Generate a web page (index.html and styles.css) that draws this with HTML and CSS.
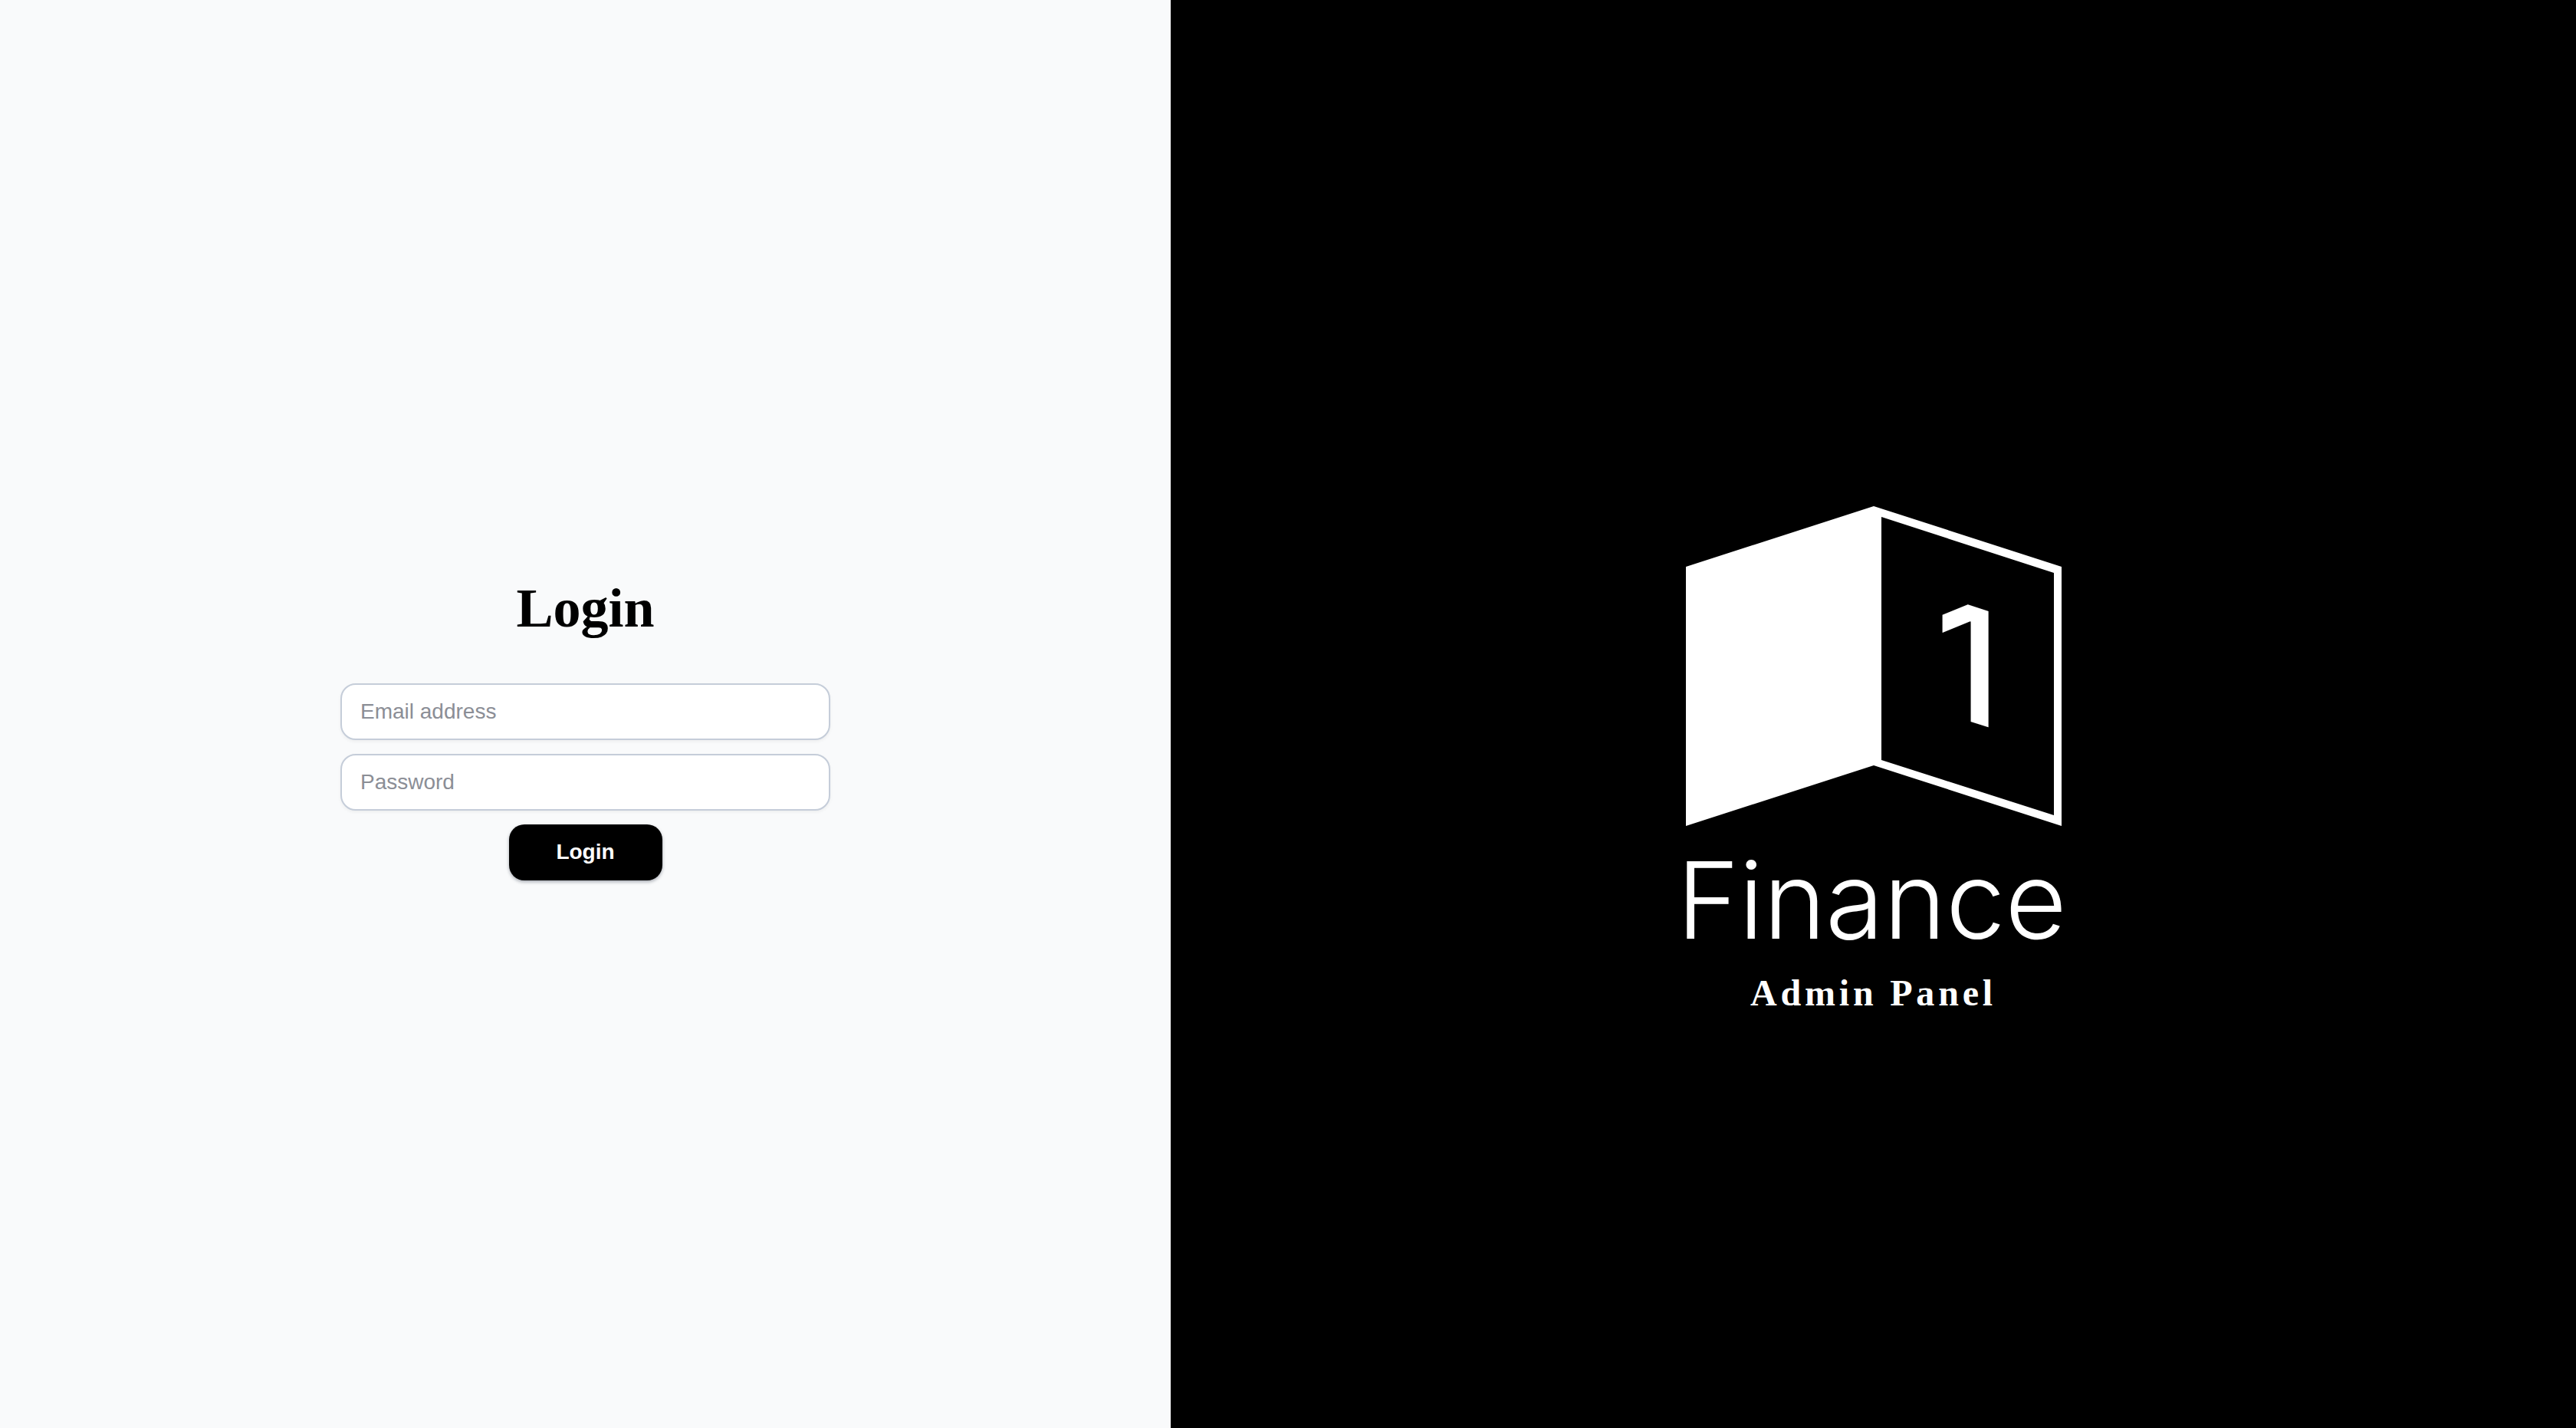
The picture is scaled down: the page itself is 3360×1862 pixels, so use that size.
FILE: index.html
```html
<!DOCTYPE html>
<html lang="en">
<head>
<meta charset="utf-8">
<title>Login</title>
<link rel="stylesheet" href="styles.css">
</head>
<body>
<main class="split">
  <section class="auth">
    <h1 class="auth-title">Login</h1>
    <form class="auth-form">
      <input class="field" type="email" placeholder="Email address">
      <input class="field" type="password" placeholder="Password">
      <button class="submit" type="button">Login</button>
    </form>
  </section>
  <section class="brand">
    <svg class="mark" viewBox="0 0 490 418" aria-hidden="true">
      <path class="mark-fill" fill-rule="evenodd" d="M245 0 L490 79 L490 417 L245 338 L0 417 L0 79 Z M255 14 L255 331 L480 403 L480 87 Z"/>
      <text class="mark-digit" transform="matrix(1 0.32 0 1 325 266)">1</text>
    </svg>
    <div class="brand-name">Finance</div>
    <div class="brand-sub">Admin Panel</div>
  </section>
</main>
</body>
</html>
```

FILE: styles.css
```css
* { box-sizing: border-box; }
html, body { margin: 0; height: 100%; }
body { background: #000; }
.split { display: flex; height: 1862px; overflow: hidden; }
.auth {
  width: 1527px;
  background: #f9fafb;
  display: flex;
  flex-direction: column;
  align-items: center;
  justify-content: center;
  padding-top: 38px;
}
.auth-title {
  margin: 0 0 58px;
  font: bold 72px/80px "Liberation Serif", serif;
  color: #000;
}
.auth-form { width: 639px; display: flex; flex-direction: column; align-items: center; gap: 18px; }
.field {
  width: 100%;
  height: 74px;
  padding: 0 24px;
  border: 2px solid #c5cdd9;
  border-radius: 20px;
  background: #fff;
  font: 28px "Liberation Sans", Arial, sans-serif;
  color: #111827;
  box-shadow: 0 2px 4px rgba(0,0,0,.05);
  outline: none;
}
.field::placeholder { color: #8b8e96; opacity: 1; }
.submit {
  width: 200px;
  height: 73px;
  border: 0;
  border-radius: 20px;
  background: #000;
  color: #fff;
  font: bold 28px "Liberation Sans", Arial, sans-serif;
  box-shadow: 0 2px 4px rgba(15,23,42,.35);
}
.brand {
  flex: 1;
  background: #000;
  color: #fff;
  display: flex;
  flex-direction: column;
  align-items: center;
  justify-content: center;
  padding-top: 121px;
}
.mark { width: 490px; height: 418px; display: block; }
.mark-fill { fill: #fff; }
.mark-digit { font: 500 208px Inter, sans-serif; fill: #fff; }
.brand-name {
  margin-top: 21px;
  padding-right: 5px;
  font: 300 139px/150px Inter, "Liberation Sans", sans-serif;
  letter-spacing: -0.6px;
}
.brand-sub {
  margin-top: 18px;
  font: bold 48px/56px "Liberation Serif", serif;
  letter-spacing: 4.8px;
}
```
